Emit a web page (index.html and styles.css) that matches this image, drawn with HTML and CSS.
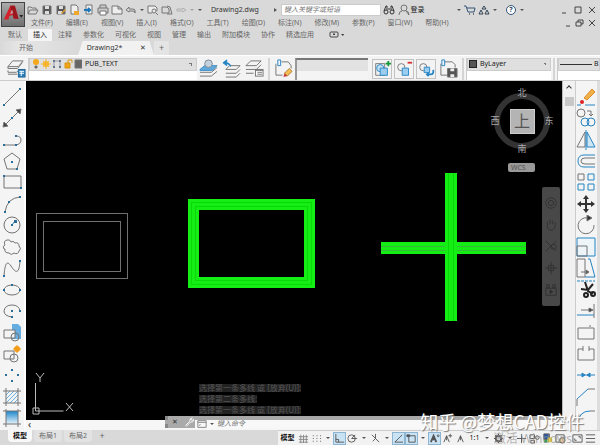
FILE: index.html
```
<!DOCTYPE html>
<html lang="zh-CN">
<head>
    <meta charset="UTF-8">
    <meta name="viewport" content="width=device-width, initial-scale=1.0">
    <title>Drawing2.dwg</title>
    <link rel="stylesheet" href="styles.css">
</head>
<body>

    <!-- Title bar and menus -->
    <header class="top">
        <button class="logo" aria-label="应用程序菜单">
            <svg viewBox="0 0 24 25"><path d="M2 18 9 3h5l4 14h-5l-1-4-4 1-1 4z" fill="#d3222b"/><path d="M9 3h5l4 14h-5L10 8z" fill="#9b1820"/><path d="M9 12l2-5 1 4z" fill="#c9b0b0"/><path d="M19 13h4l-2 3z" fill="#222"/></svg>
        </button>
        <div class="top-main">
            <div class="title-row">
                <div class="quick">
                    <button aria-label="新建"><svg viewBox="0 0 12 12"><path d="M1 10V3h3l1 1h4v2M1 10h8l2-4H3z"/></svg></button>
                    <button aria-label="保存"><svg viewBox="0 0 12 12"><path d="M2 2h8v8H2z" fill="#555"/><path d="M4 2h4v3H4zM4 7h4v3H4z" fill="#ddd" stroke="none"/></svg></button>
                    <button aria-label="另存为"><svg viewBox="0 0 12 12"><path d="M2 2h8v8H2z" fill="#555"/><path d="M4 2h4v3H4zM3 7h4v3H3z" fill="#ddd" stroke="none"/><path d="M6 9l4-4 1 1-4 4z" fill="#e0a030" stroke="none"/></svg></button>
                    <button aria-label="打开"><svg viewBox="0 0 12 12"><path d="M2 1h5l2 2v7H2z" fill="#eee"/><path d="M5 7h5v4H5z" fill="#f0a82c" stroke="none"/></svg></button>
                    <button aria-label="上传"><svg viewBox="0 0 12 12"><path d="M3 1h6v9H3z" fill="#eee"/><path d="M1 6h6M5 4l2 2-2 2" stroke="#1c78b8" stroke-width="2"/></svg></button>
                    <button aria-label="打印"><svg viewBox="0 0 12 12"><path d="M3 4V1h6v3M1 4h10v5H1z" fill="#ccc"/><path d="M3 7h6v4H3z" fill="#fff"/></svg></button>
                    <button aria-label="新图纸"><svg viewBox="0 0 12 12"><path d="M1 2h6l4 3v5H1zM7 2v3h4" fill="#eee"/></svg></button>
                    <button aria-label="放弃"><svg viewBox="0 0 12 12"><path d="M4 3 1 6l3 2V7h4q2 0 2 2 1-4-2-4H4z"/></svg></button>
                    <button class="caret" aria-label="放弃列表"></button>
                    <button aria-label="打印预览"><svg viewBox="0 0 12 12"><path d="M1 9V2h7l2 2v3M1 9h4" fill="#eee"/><circle cx="7" cy="7" r="2"/><path d="M9 9l2 2"/></svg></button>
                    <button aria-label="发布"><svg viewBox="0 0 12 12"><path d="M1 3h5l2 2v4H1z"/><path d="M6 2l3 1 2 7H6"/></svg></button>
                    <button class="dim" aria-label="重做"><svg viewBox="0 0 12 12"><path d="M8 4l3 2-3 2V7H2V5h6z"/></svg></button>
                    <button class="caret dim" aria-label="重做列表"></button>
                    <button class="caret" aria-label="自定义"></button>
                </div>
                <h1>Drawing2.dwg</h1>
                <div class="search">
                    <span class="search-arrow"></span>
                    <input type="text" placeholder="键入关键字或短语" aria-label="搜索">
                </div>
                <div class="account">
                    <button aria-label="查找"><svg viewBox="0 0 12 12"><path d="M3 2h1v4M8 2h1M8 2v4M3 2L1 7M9 2l2 5M5 5h2" stroke="#333"/><circle cx="3" cy="8" r="2" stroke="#333"/><circle cx="9" cy="8" r="2" stroke="#333"/></svg></button>
                    <button class="login"><svg viewBox="0 0 12 12"><circle cx="6" cy="4" r="3"/><path d="M1 11q0-4 3-4M8 7q3 0 3 4z"/></svg>登录</button>
                    <button class="caret login-caret" aria-label="帐户"></button>
                    <button aria-label="商店"><svg viewBox="0 0 12 12"><path d="M0 2h2l2 6h6l1-4H3" stroke="#357"/><path d="M5 10h1M9 10h1" stroke-width="2"/></svg></button>
                    <button aria-label="应用"><svg viewBox="0 0 12 12"><path d="M6 2l2 3H4zM3 6l2 4H1zM9 6l2 4H7z" stroke="#345"/></svg></button>
                    <button class="caret" aria-label="应用列表"></button>
                    <button class="help" aria-label="帮助">?</button>
                    <button class="caret" aria-label="帮助列表"></button>
                </div>
                <div class="window-btns">
                    <button aria-label="最小化"><svg viewBox="0 0 12 12"><path d="M4 9h4"/></svg></button>
                    <button aria-label="最大化"><svg viewBox="0 0 12 12"><path d="M3 3h6v6H3z"/></svg></button>
                    <button aria-label="关闭"><svg viewBox="0 0 12 12"><path d="M3 3l6 6M9 3l-6 6"/></svg></button>
                </div>
            </div>
            <div class="menu-row">
                <nav class="menu">
                    <a href="#">文件(F)</a><a href="#">编辑(E)</a><a href="#">视图(V)</a><a href="#">插入(I)</a><a href="#">格式(O)</a><a href="#">工具(T)</a><a href="#">绘图(D)</a><a href="#">标注(N)</a><a href="#">修改(M)</a><a href="#">参数(P)</a><a href="#">窗口(W)</a><a href="#">帮助(H)</a>
                </nav>
                <div class="doc-btns">
                    <button aria-label="最小化图形"><svg viewBox="0 0 12 12"><path d="M4 9h4"/></svg></button>
                    <button aria-label="还原图形"><svg viewBox="0 0 12 12"><path d="M2 5h5v4H2zM4 5V3h5v4H7"/></svg></button>
                    <button aria-label="关闭图形"><svg viewBox="0 0 12 12"><path d="M3 3l6 6M9 3l-6 6"/></svg></button>
                </div>
            </div>
        </div>
    </header>

    <!-- Ribbon tabs -->
    <nav class="ribbon">
        <a href="#">默认</a>
        <a href="#" class="active">插入</a>
        <a href="#">注释</a>
        <a href="#">参数化</a>
        <a href="#">可视化</a>
        <a href="#">视图</a>
        <a href="#">管理</a>
        <a href="#">输出</a>
        <a href="#">附加模块</a>
        <a href="#">协作</a>
        <a href="#">精选应用</a>
        <button class="ribbon-toggle" aria-label="最小化面板"><svg viewBox="0 0 16 8"><rect x="1" y="1" width="8" height="5" rx="1"/><path d="M4 3h2l-1 1z" fill="#333"/><path d="M12 3h3l-1 2z" fill="#333" stroke="none"/></svg></button>
    </nav>

    <!-- Open files -->
    <div class="files">
        <button class="file">开始</button>
        <button class="file current">Drawing2* <span>✕</span></button>
        <button class="new-file" aria-label="新图形">+</button>
    </div>

    <!-- Layer and property toolbar -->
    <div class="toolbar">
        <button class="big" aria-label="图层特性"><svg viewBox="0 0 20 20"><path d="M1 8l5-6h11l-5 6zM1 8v2h10l5-6M1 12v2h9l2-2"/><path d="M1 16h10"/><rect x="12" y="11" width="7" height="8" fill="#2a7fb8" stroke="#1c6496"/><path d="M13 13h5M13 15h5M15 13v5" stroke="#fff"/></svg></button>
        <div class="combo layer-combo">
            <div class="combo-top">
                <svg class="layer-state" viewBox="0 0 52 12">
                    <circle cx="6" cy="4" r="3" fill="#f5a81c" stroke="none"/><path d="M5 8h2v2H5z" fill="#555"/>
                    <circle cx="16" cy="6" r="3" fill="#f7b52c" stroke="none"/><path d="M16 1v10M11 6h10M13 3l6 6M19 3l-6 6" stroke="#f7b52c"/>
                    <path d="M24 3h6M24 3v6M30 3v6" stroke="#99a"/><path d="M23 2h2v2h-2zM29 2h2v2h-2zM23 8h2v2h-2zM29 8h2v2h-2z" fill="#678" stroke="none"/>
                    <path d="M35 5h5v5h-5z" fill="#f2a416" stroke="#d8940f"/><path d="M38 5V2h4v3" stroke="#d8940f"/>
                    <path d="M45 2h7v8h-7z" fill="#666"/>
                </svg>
                <select aria-label="图层"><option>PUB_TEXT</option></select>
            </div>
        </div>
        <button class="big" aria-label="置为当前"><svg viewBox="0 0 20 20"><path d="M1 14h12l6-5M1 18h12l6-5"/><path d="M1 11l5-4h13l-5 5H1z" fill="#5fa9de" stroke="#3d8cc4"/><circle cx="10" cy="5" r="4" fill="#c5d2dc" stroke="#789"/></svg></button>
        <button class="big" aria-label="上一个图层"><svg viewBox="0 0 20 20"><path d="M4 11l4-4h11l-4 4zM4 15h11l4-4M4 19h11l4-4"/><path d="M9 8q0-4-5-4M5 1L1 4l4 3z" stroke="#2584c4" fill="#2584c4"/></svg></button>
        <button class="big" aria-label="图层状态"><svg viewBox="0 0 20 20"><path d="M1 7l5-5h11l-5 5zM1 11h11l5-5M1 15h8"/><rect x="11" y="11" width="8" height="7" fill="#fff"/><path d="M11 12h8M13 14h5M13 16h5"/></svg></button>
        <span class="divider"></span>
        <button class="big" aria-label="特性匹配"><svg viewBox="0 0 20 20"><path d="M2 5v12h7M8 3h7l3 4v3" /><path d="M4 1h3v6H4z" stroke="#2584c4"/><path d="M11 15l5-5 3 3-5 5z" fill="#f1bd52" stroke="#b77b2b"/><path d="M10 19l1-4 3 3z" fill="#c43737" stroke="none"/></svg></button>
        <input class="name-box" type="text" aria-label="块名称">
        <button class="big boxed" aria-label="创建块"><svg viewBox="0 0 20 20"><path d="M3 4h10v13H3z"/><circle cx="8" cy="9" r="4" fill="#bfe0f5" stroke="#2584c4"/><path d="M8 9h8v8H8z" fill="#9bcdf0" stroke="#2584c4"/><path d="M17 1v6M14 4h6" stroke="#16953e" stroke-width="2"/></svg></button>
        <button class="big boxed" aria-label="删除块"><svg viewBox="0 0 20 20"><circle cx="7" cy="8" r="4"/><path d="M8 9h7v8H8z" fill="#9bcdf0" stroke="#2584c4"/><path d="M14 3h5" stroke="#d62e2e" stroke-width="2"/></svg></button>
        <button class="big boxed" aria-label="重置块"><svg viewBox="0 0 20 20"><circle cx="7" cy="8" r="4"/><path d="M8 8h6v6H8z" fill="#9bcdf0" stroke="#2584c4"/><path d="M12 16h3q4 0 3-5M13 14l-2 2 2 2" stroke="#2584c4" stroke-width="2"/></svg></button>
        <button class="big" aria-label="保存块"><svg viewBox="0 0 20 20"><path d="M2 5v12h8M6 3h8l3 3v3"/><path d="M3 1h3v6H3z" stroke="#2584c4"/><path d="M9 10h10v9H9z" fill="#555"/><path d="M12 10h4v3h-4zM12 16h4v3h-4z" fill="#eee" stroke="none"/></svg></button>
        <span class="divider"></span>
        <div class="combo color-combo">
            <div class="combo-top">
                <span class="swatch"></span>
                <select aria-label="颜色"><option>ByLayer</option></select>
            </div>
        </div>
        <span class="divider"></span>
        <div class="combo line-combo">
            <div class="combo-top"><span class="line"></span>B</div>
        </div>
    </div>

    <main class="work">
        <!-- Draw tools -->
        <aside class="tools left">
            <button aria-label="直线"><svg viewBox="0 0 20 20"><path d="M2 18L18 2"/><path class="dot" d="M1 17h2v2H1zM17 1h2v2h-2z"/></svg></button>
            <button aria-label="构造线"><svg viewBox="0 0 20 20"><path d="M3 17L17 3"/><path d="M1 19l1-5 4 4zM19 1l-5 1 4 4z" fill="#444"/><path class="dot" d="M9 9h2v2H9z"/></svg></button>
            <button aria-label="多段线"><svg viewBox="0 0 20 20"><path d="M2 15h12q5-1 5-5t-5-4" /><path class="dot" d="M1 14h2v2H1zM13 14h2v2h-2zM13 5h2v2h-2z"/></svg></button>
            <button aria-label="多边形"><svg viewBox="0 0 20 20"><path d="M10 2l8 6-3 10H5L2 8z"/><path class="dot" d="M9 10h2v2H9zM14 17h2v2h-2z"/></svg></button>
            <button aria-label="矩形"><svg viewBox="0 0 20 20"><path d="M2 4h17v12H2z"/><path class="dot" d="M1 3h2v2H1zM18 15h2v2h-2z"/></svg></button>
            <button aria-label="圆弧"><svg viewBox="0 0 20 20"><path d="M3 18Q5 4 18 3"/><path class="dot" d="M2 17h2v2H2zM6 7h2v2H6zM17 2h2v2h-2z"/></svg></button>
            <button aria-label="圆"><svg viewBox="0 0 20 20"><circle cx="10" cy="10" r="8"/><path d="M10 10l3-4" stroke="#2584c4"/><path class="dot" d="M9 9h2v2H9zM12 5h3v3h-3z"/></svg></button>
            <button aria-label="修订云线"><svg viewBox="0 0 20 20"><path d="M2 12q-2-3 1-4-2-4 2-5 3-1 4 2 2-2 4 1 4-1 4 3 3 3 0 5-1 4-5 2-3 3-5 0-5 0-4-4z"/></svg></button>
            <button aria-label="样条曲线"><svg viewBox="0 0 20 20"><path d="M2 18C3 5 5 2 9 8s8 10 9-5"/><path class="dot" d="M1 17h2v2H1zM17 2h2v2h-2z"/></svg></button>
            <button aria-label="椭圆"><svg viewBox="0 0 20 20"><ellipse cx="10" cy="10" rx="8" ry="5"/><path class="dot" d="M1 9h2v2H1zM9 4h2v2H9zM17 9h2v2h-2z"/></svg></button>
            <button aria-label="椭圆弧"><svg viewBox="0 0 20 20"><path d="M10 16Q2 15 2 10q1-6 8-6 7 0 8 6"/><path class="dot" d="M9 9h2v2H9zM9 15h2v2H9zM17 9h2v2h-2z"/></svg></button>
            <button aria-label="插入块"><svg viewBox="0 0 20 20"><path d="M10 1h6l3 3v12h-9z" fill="#65ade0" stroke="none"/><path d="M2 7h11v8H2z" fill="#f4f4f4"/><circle cx="13" cy="14" r="4"/></svg></button>
            <button aria-label="创建块"><svg viewBox="0 0 20 20"><path d="M2 7h10v8H2z"/><circle cx="12" cy="14" r="4"/><circle cx="15" cy="5" r="3" fill="#f29b18" stroke="none"/><path d="M15 1v8M11 5h8" stroke="#f29b18"/></svg></button>
            <button aria-label="点"><svg viewBox="0 0 20 20"><path class="dot" d="M9 4h2v2H9zM3 9h2v2H3zM15 9h2v2h-2zM9 15h2v2H9z"/></svg></button>
            <button aria-label="图案填充"><svg viewBox="0 0 20 20"><path d="M4 8l4-4M4 12l8-8M4 16L16 4M8 16l8-8M12 16l4-4" stroke="#6bb4e2"/><path d="M4 1v18M16 1v18M1 4h18M1 16h18"/></svg></button>
            <button aria-label="渐变色"><svg viewBox="0 0 20 20"><defs><linearGradient id="grad" x2="0" y2="1"><stop stop-color="#1a86cc"/><stop offset="1" stop-color="#e8f4fb"/></linearGradient></defs><path d="M4 3h12v13H4z" fill="url(#grad)" stroke="none"/><path d="M4 1v18M16 1v18M1 3h18M1 16h18"/></svg></button>
        </aside>

        <div class="view">
            <div class="canvas">
                <svg class="scene" viewBox="0 0 536 339">
                    <g fill="none" stroke="#707070" shape-rendering="crispEdges">
                        <rect x="10.5" y="132.5" width="91" height="65"/>
                        <rect x="17.5" y="140.5" width="77" height="50"/>
                    </g>
                    <rect x="167.5" y="123.500" width="116" height="78" fill="none" stroke="#14ee14" stroke-width="11"/>
                    <g fill="none" stroke="#0bd80b" shape-rendering="crispEdges">
                        <rect x="165.5" y="121.5" width="120" height="82"/>
                        <rect x="169.5" y="125.5" width="112" height="74"/>
                    </g>
                    <path d="M355 161h145v12H355z" fill="#14ee14"/>
                    <path d="M355 165.500h145M355 169.500h145" stroke="#38b838"/>
                    <path d="M419 92h12v148h-12z" fill="#14ee14"/>
                    <path d="M422.500 92v148M427.500 92v148" stroke="#0bd80b"/>
                    <!-- UCS icon -->
                    <path d="M9.500 302v28h28M7 327h6v6H7z" fill="none" stroke="#bbb"/>
                    <path d="M10 292l4 5 4-5M14 297v4M40 322l7 8M47 322l-7 8" fill="none" stroke="#bbb"/>
                </svg>
                <div class="cube">
                    <span class="ring"></span>
                    <b class="north">北</b><b class="west">西</b>
                    <button class="face">上</button>
                    <b class="east">东</b><b class="south">南</b>
                </div>
                <button class="wcs">WCS</button>
                <div class="navbar">
                    <button aria-label="全导航控制盘"><svg viewBox="0 0 16 16"><circle cx="8" cy="8" r="6"/><circle cx="8" cy="8" r="3"/></svg></button>
                    <button aria-label="平移"><svg viewBox="0 0 16 16"><path d="M4 8V4M7 7V2M10 7V3M13 8V5M4 8q0 6 4 6t5-6"/></svg></button>
                    <button aria-label="缩放"><svg viewBox="0 0 16 16"><path d="M2 2l12 12M2 14L14 2"/><circle cx="11" cy="9" r="3"/></svg></button>
                    <button aria-label="动态观察"><svg viewBox="0 0 16 16"><path d="M8 1v14M1 8h14M5 5h6v6H5z"/></svg></button>
                    <button aria-label="ShowMotion"><svg viewBox="0 0 16 16"><path d="M2 6h12v8H2zM3 2h3v3H3zM10 2h3v3h-3z"/><path d="M7 8l3 2-3 2z" fill="#222"/></svg></button>
                </div>
                <div class="history">
                    <p>选择第一条多线 或 [放弃(U)]:</p>
                    <p>选择第二条多线:</p>
                    <p>选择第一条多线 或 [放弃(U)]:</p>
                </div>
            </div>
            <div class="hscroll">‹</div>
            <div class="command">
                <div class="command-grip"><span>✕</span><svg viewBox="0 0 12 12"><path d="M2 10l5-5q-1-3 3-4L8 3l2 1 2-1q-1 4-4 3l-5 5z" stroke="#fff"/></svg></div>
                <svg class="prompt" viewBox="0 0 12 12"><path d="M1 2h10v8H1zM1 4h10M3 6l1 1-1 1"/></svg><i class="caret"></i>
                <input type="text" placeholder="键入命令" aria-label="命令">
            </div>
        </div>

        <div class="vscroll"><span class="up"></span><span class="thumb"></span></div>

        <!-- Modify tools -->
        <aside class="tools right">
            <button aria-label="删除"><svg viewBox="0 0 20 20"><path d="M8 11l8-9 3 3-8 8z" fill="#f0b04a" stroke="#d88c28"/><circle cx="6" cy="15" r="2" fill="#d22" stroke="none"/><path d="M1 18h4M9 18h10" stroke="#2584c4"/></svg></button>
            <button aria-label="复制"><svg viewBox="0 0 20 20"><circle cx="5" cy="5" r="4"/><path d="M11 3h4v4M13 6l2 2 2-2"/><circle cx="9" cy="14" r="4" stroke="#2584c4"/><circle cx="15" cy="14" r="4" stroke="#2584c4"/></svg></button>
            <button aria-label="镜像"><svg viewBox="0 0 20 20"><path d="M9 2v15H1z"/><path d="M11 2v15h8z" fill="#cfe5f3" stroke="#2584c4"/><path d="M10 0v20" stroke="#2584c4"/></svg></button>
            <button aria-label="偏移"><svg viewBox="0 0 20 20"><path d="M19 4H8q-6 0-6 6t6 6h11" stroke="#2584c4"/><path d="M19 7H9q-4 0-4 3t4 3h10"/></svg></button>
            <button aria-label="阵列"><svg viewBox="0 0 20 20"><path d="M2 2h6v6H2z"/><path d="M12 2h6v6h-6zM2 12h6v6H2zM12 12h6v6h-6z" stroke="#2584c4"/></svg></button>
            <button aria-label="移动"><svg viewBox="0 0 20 20"><path d="M10 3v14M3 10h14" stroke-width="2" stroke="#333"/><path d="M10 1l3 4H7zM10 19l3-4H7zM1 10l4-3v6zM19 10l-4-3v6z" fill="#333" stroke="none"/></svg></button>
            <button aria-label="旋转"><svg viewBox="0 0 20 20"><path d="M12 3a8 8 0 1 0 6 7"/><path d="M11 0l5 3-5 3z" fill="#333"/></svg></button>
            <button aria-label="缩放"><svg viewBox="0 0 20 20"><path d="M1 1h18v18H1z" stroke="#2584c4" fill="#eef5f9"/><path d="M1 9h10v10H1z"/></svg></button>
            <button aria-label="拉伸"><svg viewBox="0 0 20 20"><path d="M1 1h8v18H1z"/><path d="M12 1h2l5 18H9" stroke="#2584c4"/><path d="M5 14h8M10 12l3 2-3 2z" fill="#333"/></svg></button>
            <button aria-label="修剪"><svg viewBox="0 0 20 20"><path d="M1 1h18" stroke="#2584c4" stroke-dasharray="3 1"/><path d="M9 2l3 9 5 3M5 9l7 1 5-6" stroke="#222" stroke-width="2"/><circle cx="10" cy="15" r="2" stroke="#222" stroke-width="2"/><circle cx="17" cy="14" r="2" stroke="#222" stroke-width="2"/></svg></button>
            <button aria-label="延伸"><svg viewBox="0 0 20 20"><path d="M1 14h17" stroke="#2584c4"/><path d="M5 9h10M18 3v14"/><path d="M13 7l4 2-4 2z" fill="#333"/></svg></button>
            <button aria-label="打断于点"><svg viewBox="0 0 20 20"><path d="M13 5H2v11h16V5h-3M14 2v4"/></svg></button>
            <button aria-label="打断"><svg viewBox="0 0 20 20"><path d="M7 5H2v11h16V5h-5M7 2v5M13 2v5"/></svg></button>
            <button aria-label="合并"><svg viewBox="0 0 20 20"><path d="M1 10h18M6 8l3 2-3 2zM14 8l-3 2 3 2z" stroke="#2584c4" fill="#2584c4"/></svg></button>
            <button aria-label="倒角"><svg viewBox="0 0 20 20"><path d="M1 19v-7M12 2h7"/><path d="M1 12L12 2" stroke="#2584c4"/></svg></button>
            <button aria-label="圆角"><svg viewBox="0 0 20 20"><path d="M2 19v-4M14 3h5"/><path d="M2 15Q3 3 14 3" stroke="#2584c4"/></svg></button>
        </aside>
    </main>

    <!-- Layout tabs and status bar -->
    <footer class="bottom">
        <nav class="layouts">
            <a href="#" class="active">模型</a>
            <a href="#">布局1</a>
            <a href="#">布局2</a>
            <button aria-label="新建布局">+</button>
        </nav>
        <div class="status">
            <button class="model">模型</button>
            <button aria-label="栅格"><svg viewBox="0 0 12 12"><path d="M3 2v9M6 2v9M9 2v9M1 4h10M1 7h10M1 10h10" stroke="#888"/></svg></button>
            <button aria-label="捕捉"><svg viewBox="0 0 12 12"><path d="M2 3h9M2 6h9M2 9h9" stroke-dasharray="1 3" stroke-width="1"/></svg></button>
            <button class="caret" aria-label="捕捉列表"></button>
            <button class="on" aria-label="正交"><svg viewBox="0 0 12 12"><path d="M2 1v9h9M2 7h3v3"/></svg></button>
            <button aria-label="极轴"><svg viewBox="0 0 12 12"><circle cx="5" cy="6" r="4"/><path d="M5 6h6M5 6l4-4"/></svg></button>
            <button class="caret" aria-label="极轴列表"></button>
            <button aria-label="等轴测"><svg viewBox="0 0 12 12"><path d="M2 2l8 8M6 6V1M6 6l-3 3"/></svg></button>
            <button class="caret" aria-label="等轴测列表"></button>
            <button class="on" aria-label="对象追踪"><svg viewBox="0 0 12 12"><path d="M10 2L2 10h9"/></svg></button>
            <button class="on" aria-label="对象捕捉"><svg viewBox="0 0 12 12"><path d="M3 3h7v7H3z"/><path d="M1 2h3v2H1z" fill="#357"/></svg></button>
            <button class="caret" aria-label="对象捕捉列表"></button>
            <button class="on" aria-label="注释可见性"><svg viewBox="0 0 12 12"><path d="M2 10l3-7 3 7M5 3v5" stroke-width="2"/><circle cx="10" cy="3" r="1"/></svg></button>
            <button aria-label="自动缩放"><svg viewBox="0 0 12 12"><path d="M2 10l3-7 3 7M5 3v5"/><path d="M9 1v4M7 3h4"/></svg></button>
            <button aria-label="注释比例"><svg viewBox="0 0 12 12"><path d="M3 10l3-7 3 7M6 3v5"/></svg></button>
            <button class="scale">1:1</button>
            <button class="caret" aria-label="比例列表"></button>
            <button aria-label="切换工作空间"><svg viewBox="0 0 12 12"><circle cx="6" cy="6" r="3" stroke-width="2"/><path d="M6 1v2M6 9v2M1 6h2M9 6h2M2 2l2 2M8 8l2 2M10 2L8 4M4 8l-2 2"/></svg></button>
            <button class="caret" aria-label="工作空间列表"></button>
            <button aria-label="注释监视器"><svg viewBox="0 0 12 12"><path d="M6 1v10M1 6h10"/></svg></button>
            <button aria-label="隔离对象"><svg viewBox="0 0 12 12"><path d="M1 2h5v4H1zM2 8h4v3H2z"/><circle cx="9" cy="5" r="2"/></svg></button>
            <button aria-label="硬件加速"><svg viewBox="0 0 12 12"><path d="M2 1h6v6H2z" fill="#2456a8"/><path d="M6 5h5v5H6z" fill="#e6cf35" stroke="none"/><circle cx="4" cy="9" r="2" fill="#33a05a" stroke="none"/></svg></button>
            <button aria-label="快捷特性"><svg viewBox="0 0 12 12"><path d="M1 2h9v8H1z"/><circle cx="8" cy="8" r="3" fill="#e9c9a0"/></svg></button>
            <button class="fullscreen" aria-label="全屏显示"><svg viewBox="0 0 12 12"><path d="M1 2h10v8H1zM7 4h2v2M5 8H3V6"/></svg></button>
            <button aria-label="自定义"><svg viewBox="0 0 12 12"><path d="M1 2h10M1 6h10M1 10h10"/></svg></button>
        </div>
    </footer>

    <div class="activate">激活 Windows</div>
    <div class="watermark">知乎 @梦想CAD控件</div>

</body>
</html>
```
FILE: styles.css
```
* {
    box-sizing: border-box;
}

body {
    margin: 0;
    height: 100vh;
    display: flex;
    flex-direction: column;
    position: relative;
    overflow: hidden;
    background: #d9d9d9;
    color: #666;
    font-family: "Noto Sans", "Noto Sans CJK SC", sans-serif;
    font-size: 7px;
    line-height: 10px;
}

button, input, select {
    font: inherit;
    color: inherit;
    border: none;
    background: none;
    padding: 0;
    margin: 0;
}

button {
    display: flex;
    align-items: center;
    justify-content: center;
    flex: none;
}

a {
    color: inherit;
    text-decoration: none;
    white-space: nowrap;
}

svg {
    display: block;
    flex: none;
    fill: none;
    stroke: #747474;
}

.caret {
    width: 10px;
    flex: none;
}

.caret::before {
    content: "";
    display: block;
    margin: auto;
    width: 0;
    border: 2px solid transparent;
    border-top-color: #555;
    border-bottom: none;
}

.dim {
    opacity: 0.4;
}

/* Title bar */
.top {
    display: flex;
    height: 29px;
    flex: none;
    padding: 2px 2px 0 1px;
}

.logo {
    width: 24px;
    height: 25px;
    background: linear-gradient(#aaa, #707070);
    border: 1px solid #444;
}

.logo svg {
    width: 22px;
    height: 23px;
    stroke: none;
}

.top-main {
    flex: 1;
    min-width: 0;
}

.title-row {
    display: flex;
    align-items: center;
    height: 15px;
}

.quick {
    display: flex;
    gap: 2px;
    width: 186px;
    padding-left: 2px;
    flex: none;
}

.quick svg, .account svg, .window-btns svg, .doc-btns svg {
    width: 12px;
    height: 12px;
}

.quick .caret {
    width: 6px;
}

.window-btns svg, .doc-btns svg {
    stroke: #444;
}

h1 {
    margin: 0;
    font-size: 7px;
    font-weight: normal;
    color: #333;
    width: 62px;
}

.search {
    display: flex;
    align-items: center;
    width: 108px;
}

.search-arrow {
    border: 2px solid transparent;
    border-left: 3px solid #555;
    border-right: none;
    margin: 0 4px 0 1px;
}

.search input {
    flex: 1;
    min-width: 0;
    height: 12px;
    background: #fff;
    border: 1px solid #ccc;
    padding-left: 2px;
}

input::placeholder {
    color: #777;
    font-style: italic;
}

.account {
    display: flex;
    gap: 2px;
    align-items: center;
    padding-left: 2px;
    color: #222;
}

.login {
    width: 28px;
    gap: 1px;
}

.login-caret {
    margin-left: 29px;
}

.account .caret {
    width: 6px;
}

.help {
    width: 10px;
    height: 10px;
    margin: 0 1px 0 6px;
    border: 1px solid #357;
    border-radius: 50%;
    background: #fff;
    color: #246;
    font-weight: bold;
}

.window-btns, .doc-btns {
    display: flex;
    margin-left: auto;
    gap: 2px;
}

.doc-btns {
    gap: 0;
}

.menu-row {
    display: flex;
    align-items: center;
    height: 12px;
}

.menu {
    display: flex;
    gap: 13px;
    padding-left: 6px;
}

/* Ribbon tabs */
.ribbon {
    display: flex;
    gap: 1px;
    height: 12px;
    line-height: 12px;
    flex: none;
    padding-left: 3px;
}

.ribbon a {
    padding: 0 5px;
}

.ribbon .active {
    background: #f4f4f4;
    color: #222;
}

.ribbon-toggle {
    margin-left: 9px;
}

.ribbon-toggle svg {
    width: 16px;
    height: 8px;
    stroke: #444;
}

/* File tabs */
.files {
    display: flex;
    height: 14px;
    flex: none;
}

.file {
    width: 78px;
    padding-right: 26px;
    background: linear-gradient(90deg, #d9d9d9, #e6e6e6 20px, #d9d9d9);
}

.file.current {
    width: 76px;
    padding: 0 6px 0 7px;
    gap: 18px;
    color: #333;
    background: #f1f1f1;
    clip-path: polygon(6% 0, 94% 0, 100% 100%, 0 100%);
}

.new-file {
    width: 15px;
    font-size: 9px;
    background: #e4e4e4;
}

/* Toolbar */
.toolbar {
    display: flex;
    align-items: center;
    height: 26px;
    flex: none;
    padding: 1px 0 0 5px;
    background: #f3f3f3;
    border-top: 1px solid #fff;
    border-bottom: 1px solid #ccc;
    overflow: hidden;
}

.big {
    width: 22px;
    height: 22px;
    margin-right: 1px;
}

.big svg {
    width: 19px;
    height: 19px;
}

.boxed {
    width: 21px;
    padding: 1px;
}

.boxed svg {
    width: 18px;
    height: 18px;
    outline: 1px solid #c2c2c2;
}

.combo {
    height: 22px;
    background: #fff;
    border-left: 1px solid #ccc;
    flex: none;
}

.combo-top {
    display: flex;
    align-items: center;
    height: 13px;
    background: #dfdfdf;
    border: 1px solid #ccc;
    color: #222;
}

.combo select {
    flex: 1;
    min-width: 0;
    margin-left: 3px;
    appearance: none;
    background: linear-gradient(45deg, transparent 50%, #777 50%) right 4px center / 3px 3px no-repeat;
}

.layer-combo {
    width: 169px;
}

.layer-state {
    width: 52px;
    height: 12px;
}

.divider {
    width: 2px;
    height: 22px;
    margin: 0 2px;
    background: #d4d4d4;
    flex: none;
}

.name-box {
    flex: 1;
    min-width: 20px;
    height: 22px;
    margin: 0 3px 0 0;
    border-top: 2px solid #777;
    border-left: 2px solid #999;
    background: linear-gradient(#e2e2e2 11px, #f4f4f4 11px);
}

.color-combo {
    width: 85px;
}

.swatch {
    width: 8px;
    height: 8px;
    margin-left: 1px;
    background: #555;
    border: 1px solid #222;
}

.line-combo {
    width: 43px;
}

.line {
    width: 32px;
    height: 1px;
    margin: 0 2px 0 1px;
    background: #333;
    flex: none;
}

/* Work area */
.work {
    display: flex;
    flex: 1;
    min-height: 0;
    background: #f3f3f3;
}

.tools {
    display: flex;
    flex-direction: column;
    width: 26px;
    flex: none;
    padding: 5px 2px 1px 1px;
    border-right: 2px solid #fff;
    background: #f4f4f4;
}

.tools.right {
    width: 25px;
    padding-left: 1px;
    border-left: 1px solid #ccc;
    border-right: 3px solid #ddd;
}

.tools button {
    flex: 1;
    min-height: 0;
}

.tools svg {
    width: 20px;
    height: 20px;
}

.dot {
    fill: #2b6d96;
    stroke: none;
}

.view {
    flex: 1;
    min-width: 0;
    display: flex;
    flex-direction: column;
    position: relative;
}

.canvas {
    flex: 1;
    min-height: 0;
    position: relative;
    background: #000;
}

.scene {
    width: 100%;
    height: 100%;
    stroke: none;
}

.cube {
    position: absolute;
    top: 6px;
    right: 5px;
    width: 70px;
    height: 68px;
    display: grid;
    grid-template-columns: 16px 1fr 16px;
    grid-template-rows: 20px 1fr 20px;
    place-items: center;
    color: #aaa;
    font-size: 9px;
    line-height: 12px;
}

.cube b {
    position: relative;
    font-weight: normal;
}

.ring {
    position: absolute;
    inset: 6px 7px;
    border: 6px solid #333;
    border-radius: 50%;
}

.north, .south {
    grid-column: 1 / 4;
}

.north {
    align-self: start;
}

.south {
    align-self: end;
}

.face {
    width: 25px;
    height: 25px;
    position: relative;
    background: #b4b4b4;
    border: 1px solid #ccc;
    color: #555;
    font-size: 16px;
}

.wcs {
    position: absolute;
    top: 82px;
    right: 27px;
    width: 27px;
    height: 9px;
    padding-left: 3px;
    justify-content: flex-start;
    background: #999;
    border-radius: 2px;
    color: #555;
}

.navbar {
    position: absolute;
    top: 106px;
    right: 2px;
    width: 18px;
    height: 119px;
    padding: 5px 0;
    display: flex;
    flex-direction: column;
    justify-content: space-around;
    align-items: center;
    background: #484848;
    border-radius: 2px;
}

.navbar svg {
    width: 14px;
    height: 14px;
    stroke: #303030;
}

.history {
    position: absolute;
    left: 173px;
    bottom: 6px;
    display: flex;
    flex-direction: column;
    align-items: flex-start;
    gap: 3px;
    color: #555;
    font-size: 8px;
    line-height: 8px;
}

.history p {
    margin: 0;
    background: #222;
}

.hscroll {
    height: 10px;
    flex: none;
    padding-left: 2px;
    background: #f6f6f6;
    color: #222;
    font-size: 10px;
    line-height: 8px;
}

.command {
    position: absolute;
    left: 139px;
    right: 0;
    bottom: 2px;
    height: 12px;
    display: flex;
    align-items: center;
    background: #f8f8f8;
    border-top: 4px solid #a8a8a8;
}

.command-grip {
    display: flex;
    align-items: center;
    justify-content: space-between;
    width: 30px;
    height: 12px;
    margin: -4px 2px 0 0;
    padding: 0 1px 0 4px;
    background: #aaa;
    border-left: 3px dotted #888;
    color: #333;
}

.command svg {
    width: 10px;
    height: 10px;
}

.command input {
    flex: 1;
    min-width: 0;
    height: 8px;
}

.vscroll {
    width: 13px;
    flex: none;
    display: flex;
    flex-direction: column;
    align-items: center;
    background: #f1f1f1;
    border-left: 1px solid #bbb;
}

.up {
    width: 4px;
    height: 4px;
    margin: 5px 0 7px;
    border-top: 1px solid #333;
    border-left: 1px solid #333;
    transform: rotate(45deg);
}

.thumb {
    width: 9px;
    height: 9px;
    background: #c8c8c8;
}

/* Bottom bar */
.bottom {
    display: flex;
    justify-content: space-between;
    height: 15px;
    flex: none;
}

.layouts {
    display: flex;
    gap: 2px;
    padding-left: 8px;
    line-height: 12px;
}

.layouts a {
    height: 12px;
    padding: 0 5px;
    background: #e2e2e2;
    border-radius: 0 0 4px 4px;
}

.layouts .active {
    background: #f8f8f8;
    color: #111;
    font-weight: bold;
}

.layouts button {
    width: 16px;
    height: 12px;
    font-size: 9px;
}

.status {
    display: flex;
    align-items: center;
    padding-right: 3px;
    background: #f2f2f2;
    border-top: 1px solid #ccc;
}

.status button {
    width: 13px;
    height: 13px;
}

.status svg {
    width: 11px;
    height: 11px;
    stroke: #555;
}

.status .caret {
    width: 10px;
}

.status .model {
    width: 19px;
    color: #111;
    font-weight: bold;
}

.status .scale {
    width: 15px;
    color: #111;
}

.status .on {
    background: #c9e2f4;
    border: 1px solid #8db5d2;
}

.status .fullscreen {
    margin-left: 4px;
}

.activate {
    position: absolute;
    right: 28px;
    bottom: 0;
    font-size: 12px;
    line-height: 12px;
    color: rgba(150, 150, 150, 0.7);
}

.watermark {
    position: absolute;
    right: 16px;
    bottom: 15px;
    font-family: "Noto Sans CJK SC", sans-serif;
    font-size: 18px;
    line-height: 18px;
    color: #fff;
    text-shadow: 1px 1px 1px #777;
    white-space: nowrap;
}
```
